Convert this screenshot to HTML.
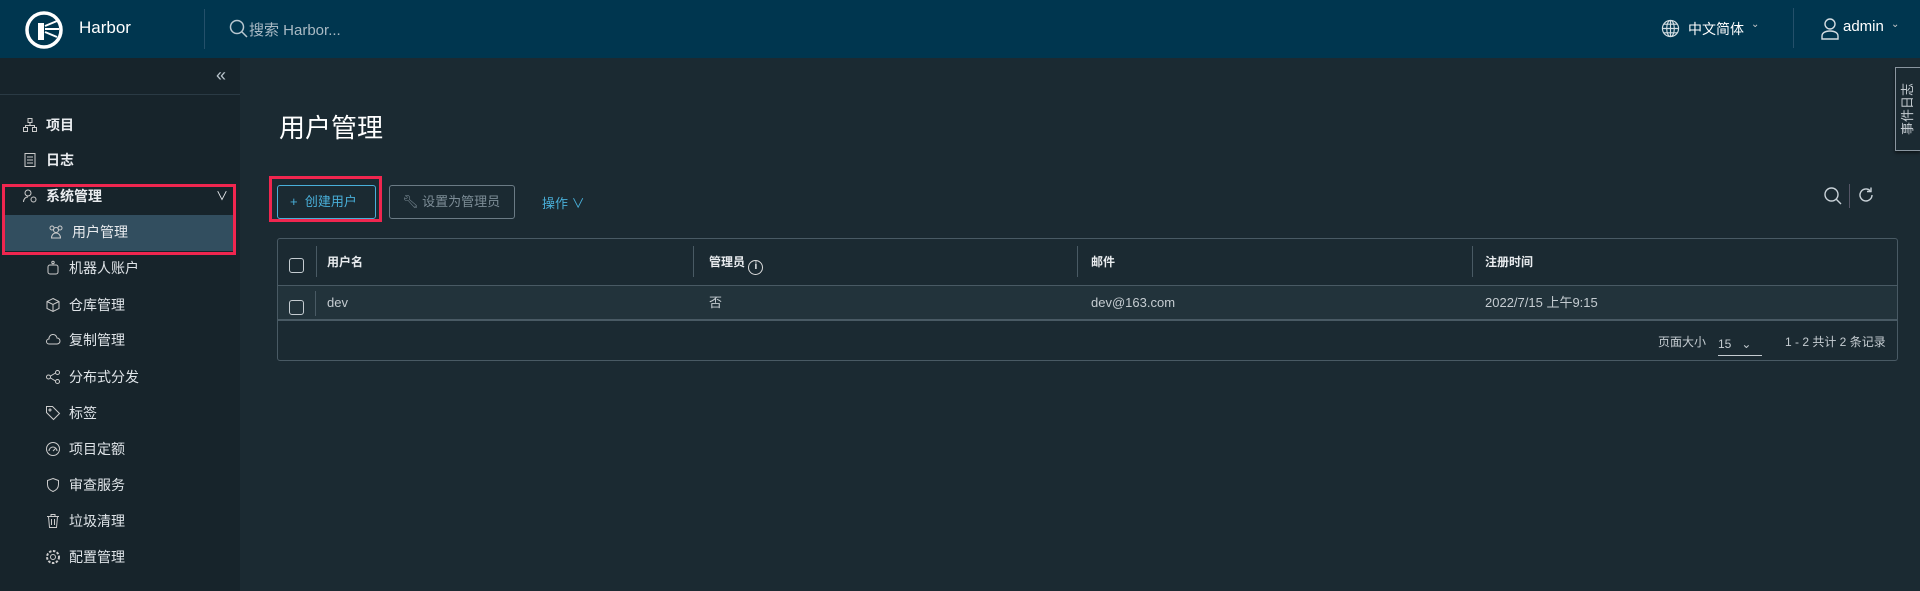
<!DOCTYPE html>
<html><head><meta charset="utf-8"><style>
*{box-sizing:border-box;margin:0;padding:0}
body{width:1920px;height:591px;overflow:hidden;background:#1b2a32;font-family:"Liberation Sans","Noto Sans CJK SC",sans-serif;color:#e9ecef;position:relative}
.hdr{position:absolute;left:0;top:0;width:1920px;height:58px;background:#00364f}
.abs{position:absolute}
.side{position:absolute;left:0;top:58px;width:240px;height:533px;background:#17242b}
.mi{position:absolute;font-size:14px;color:#e9ecef;display:flex;align-items:center;gap:8px;line-height:18px}
.mi svg{width:16px;height:16px}
.t{position:absolute;font-size:13px;line-height:16px}
</style></head><body>
<div class="hdr">
 <svg class="abs" style="left:24px;top:10px" width="40" height="40" viewBox="0 0 40 40"><circle cx="20" cy="20" r="17" fill="none" stroke="#fff" stroke-width="3.5"/><rect x="14" y="13" width="6" height="17" fill="#fff"/><path d="M21 16 L33 11 M21 19 L35 19 M21 22 L33 27" stroke="#fff" stroke-width="2"/></svg>
 <div class="abs" style="left:79px;top:18px;font-size:17px;color:#fff">Harbor</div>
 <div class="abs" style="left:204px;top:9px;width:1px;height:40px;background:#24506a"></div>
 <svg class="abs" style="left:229px;top:19px" width="20" height="20" viewBox="0 0 20 20"><circle cx="8" cy="8" r="6.5" fill="none" stroke="#b8c7d0" stroke-width="1.5"/><path d="M13 13l5 5" stroke="#b8c7d0" stroke-width="1.5"/></svg>
 <div class="abs" style="left:249px;top:19px;font-size:15px;color:#a9bac4">搜索 Harbor...</div>
 <svg class="abs" style="left:1661px;top:19px" width="19" height="19" viewBox="0 0 20 20" fill="none" stroke="#d4dde2" stroke-width="1.2"><circle cx="10" cy="10" r="8.5"/><ellipse cx="10" cy="10" rx="4" ry="8.5"/><path d="M1.5 10h17M3 5.5h14M3 14.5h14M10 1.5v17"/></svg>
 <div class="abs" style="left:1688px;top:19px;font-size:14px;color:#fff">中文简体</div>
 <div class="abs" style="left:1751px;top:19px;font-size:10px;color:#ccc">⌄</div>
 <div class="abs" style="left:1793px;top:8px;width:1px;height:40px;background:#24506a"></div>
 <svg class="abs" style="left:1820px;top:18px" width="20" height="22" viewBox="0 0 20 22" fill="none" stroke="#d4dde2" stroke-width="1.4"><circle cx="10" cy="6" r="5"/><path d="M2 21v-3c0-3 3-5 8-5s8 2 8 5v3z"/></svg>
 <div class="abs" style="left:1843px;top:18px;font-size:15px;color:#fff">admin</div>
 <div class="abs" style="left:1891px;top:19px;font-size:10px;color:#ccc">⌄</div>
</div>
<div class="side">
 <div class="abs" style="left:216px;top:7px;font-size:18px;color:#b8c4cc">«</div>
 <div class="abs" style="left:0;top:36px;width:240px;height:1px;background:#2a3a44"></div>
 <div class="abs" style="left:4px;top:157px;width:232px;height:36px;background:#324e5f"></div>
</div>
<div class="abs" style="left:2px;top:184px;width:234px;height:71px;border:3px solid #f0264f"></div>
<div class="mi" style="left:22px;top:116px"><svg viewBox="0 0 16 16" fill="none" stroke="#ccc"><rect x="6" y="1.5" width="4" height="4"/><rect x="1.5" y="10.5" width="4" height="4"/><rect x="10.5" y="10.5" width="4" height="4"/><path d="M8 5.5v3M3.5 10.5v-2h9v2"/></svg><b style="font-weight:bold">项目</b></div>
<div class="mi" style="left:22px;top:151px"><svg viewBox="0 0 16 16" fill="none" stroke="#ccc"><rect x="3" y="1.5" width="10" height="13"/><path d="M5 5h6M5 8h6M5 11h6"/></svg><b>日志</b></div>
<div class="mi" style="left:22px;top:187px;width:206px"><svg viewBox="0 0 16 16" fill="none" stroke="#ccc"><circle cx="6" cy="5" r="3"/><path d="M1.5 14c0-3 2-5 4.5-5"/><circle cx="11.5" cy="11.5" r="2.5"/></svg><b>系统管理</b><span style="margin-left:auto;font-size:12px">∨</span></div>
<div class="mi" style="left:48px;top:223px"><svg viewBox="0 0 16 16" fill="none" stroke="#ccc"><circle cx="8" cy="6" r="2.5"/><circle cx="4" cy="4" r="2"/><circle cx="12" cy="4" r="2"/><path d="M3.5 14c0-3 2-5 4.5-5s4.5 2 4.5 5z"/></svg><span>用户管理</span></div>
<div class="mi" style="left:45px;top:259px;color:#dfe4e8"><svg viewBox="0 0 16 16" fill="none" stroke="#ccc"><rect x="3" y="5" width="10" height="9" rx="2"/><circle cx="8" cy="2.5" r="1.2"/><path d="M6 9h0M10 9h0" stroke-width="2"/></svg>机器人账户</div>
<div class="mi" style="left:45px;top:296px;color:#dfe4e8"><svg viewBox="0 0 16 16" fill="none" stroke="#ccc"><path d="M8 1.5l6 3v7l-6 3-6-3v-7z M2 4.5l6 3 6-3M8 7.5v7"/></svg>仓库管理</div>
<div class="mi" style="left:45px;top:331px;color:#dfe4e8"><svg viewBox="0 0 16 16" fill="none" stroke="#ccc"><path d="M4 12h8a3 3 0 0 0 0-6 4 4 0 0 0-8 1 2.5 2.5 0 0 0 0 5z"/></svg>复制管理</div>
<div class="mi" style="left:45px;top:368px;color:#dfe4e8"><svg viewBox="0 0 16 16" fill="none" stroke="#ccc"><circle cx="3.5" cy="8" r="2"/><circle cx="12.5" cy="3.5" r="2"/><circle cx="12.5" cy="12.5" r="2"/><path d="M5.5 7l5-3M5.5 9l5 3"/></svg>分布式分发</div>
<div class="mi" style="left:45px;top:404px;color:#dfe4e8"><svg viewBox="0 0 16 16" fill="none" stroke="#ccc"><path d="M1.5 1.5h6l7 7-6 6-7-7z"/><circle cx="5" cy="5" r="1"/></svg>标签</div>
<div class="mi" style="left:45px;top:440px;color:#dfe4e8"><svg viewBox="0 0 16 16" fill="none" stroke="#ccc"><circle cx="8" cy="8" r="6.5"/><path d="M4 10a4 4 0 0 1 8 0M8 10l3-3"/></svg>项目定额</div>
<div class="mi" style="left:45px;top:476px;color:#dfe4e8"><svg viewBox="0 0 16 16" fill="none" stroke="#ccc"><path d="M8 1.5l5.5 2v4c0 4-3 6-5.5 7-2.5-1-5.5-3-5.5-7v-4z"/></svg>审查服务</div>
<div class="mi" style="left:45px;top:512px;color:#dfe4e8"><svg viewBox="0 0 16 16" fill="none" stroke="#ccc"><path d="M2 3.5h12M6 3.5v-2h4v2M3.5 3.5l1 11h7l1-11M6.5 6v6M9.5 6v6"/></svg>垃圾清理</div>
<div class="mi" style="left:45px;top:548px;color:#dfe4e8"><svg viewBox="0 0 16 16" fill="none" stroke="#ccc"><circle cx="8" cy="8" r="2.5"/><circle cx="8" cy="8" r="6" stroke-dasharray="2.5 1.5" stroke-width="2"/></svg>配置管理</div>

<div class="abs" style="left:279px;top:113px;font-size:26px;color:#fff;line-height:30px">用户管理</div>
<div class="abs" style="left:269px;top:176px;width:113px;height:46px;border:3px solid #f0264f"></div>
<div class="abs" style="left:277px;top:185px;width:99px;height:34px;border:1px solid #49afd9;border-radius:3px;color:#49afd9;font-size:13px;line-height:32px;padding-left:12px">+ &nbsp;创建用户</div>
<div class="abs" style="left:389px;top:185px;width:126px;height:34px;border:1px solid #6b7b85;border-radius:3px;color:#7d8d97;font-size:13px;line-height:32px;padding-left:12px">🔧︎ 设置为管理员</div>
<div class="abs" style="left:542px;top:193px;font-size:13px;color:#49afd9">操作 ∨</div>
<svg class="abs" style="left:1823px;top:186px" width="20" height="20" viewBox="0 0 20 20" fill="none" stroke="#c9d2d8" stroke-width="1.4"><circle cx="8.5" cy="8.5" r="6.5"/><path d="M13 13l5 5"/></svg>
<div class="abs" style="left:1849px;top:184px;width:1px;height:24px;background:#556"></div>
<svg class="abs" style="left:1857px;top:186px" width="18" height="18" viewBox="0 0 18 18" fill="none" stroke="#c9d2d8" stroke-width="1.4"><path d="M15 9a6 6 0 1 1-2-4.5M14 1.5v4h-4"/></svg>

<div class="abs" style="left:277px;top:238px;width:1621px;height:123px;border:1px solid #495a64;border-radius:3px"></div>
<div class="abs" style="left:278px;top:285px;width:1619px;height:36px;background:#22333b;border-top:1px solid #495a64;border-bottom:2px solid #495a64"></div>
<div class="abs" style="left:289px;top:258px;width:15px;height:15px;border:1px solid #c5ccd1;border-radius:3px"></div>
<div class="abs" style="left:289px;top:300px;width:15px;height:15px;border:1px solid #c5ccd1;border-radius:3px"></div>
<div class="abs" style="left:316px;top:246px;width:1px;height:31px;background:#495a64"></div>
<div class="abs" style="left:315px;top:291px;width:1px;height:25px;background:#495a64"></div>
<div class="abs" style="left:693px;top:246px;width:1px;height:31px;background:#495a64"></div>
<div class="abs" style="left:1077px;top:246px;width:1px;height:31px;background:#495a64"></div>
<div class="abs" style="left:1472px;top:246px;width:1px;height:31px;background:#495a64"></div>
<div class="t" style="left:327px;top:254px;font-weight:bold;font-size:12px">用户名</div>
<div class="t" style="left:709px;top:254px;font-weight:bold;font-size:12px">管理员 <span style="display:inline-block;width:15px;height:15px;border:1.5px solid #ddd;border-radius:50%;font-size:10px;text-align:center;line-height:12px;vertical-align:-3px">i</span></div>
<div class="t" style="left:1091px;top:254px;font-weight:bold;font-size:12px">邮件</div>
<div class="t" style="left:1485px;top:254px;font-weight:bold;font-size:12px">注册时间</div>
<div class="t" style="left:327px;top:295px;color:#c5ccd1">dev</div>
<div class="t" style="left:709px;top:295px;color:#c5ccd1">否</div>
<div class="t" style="left:1091px;top:295px;color:#c5ccd1">dev@163.com</div>
<div class="t" style="left:1485px;top:295px;color:#c5ccd1">2022/7/15 上午9:15</div>
<div class="t" style="left:1658px;top:334px;font-size:12px;color:#c5ccd1">页面大小</div>
<div class="t" style="left:1718px;top:336px;width:44px;height:20px;border-bottom:1px solid #c5ccd1;font-size:12px;color:#c5ccd1">15 &nbsp; ⌄</div>
<div class="t" style="left:1785px;top:334px;font-size:12px;color:#c5ccd1">1 - 2 共计 2 条记录</div>
<div class="abs" style="left:1895px;top:67px;width:25px;height:84px;border:1px solid #8a96a0;border-right:none;background:#1b2a32;box-shadow:0 2px 3px #0008"></div>
<div class="abs" style="left:1866px;top:100px;width:84px;height:18px;transform:rotate(-90deg);color:#c5ccd1;font-size:13px;text-align:center;line-height:18px">事件日志</div>
</body></html>
